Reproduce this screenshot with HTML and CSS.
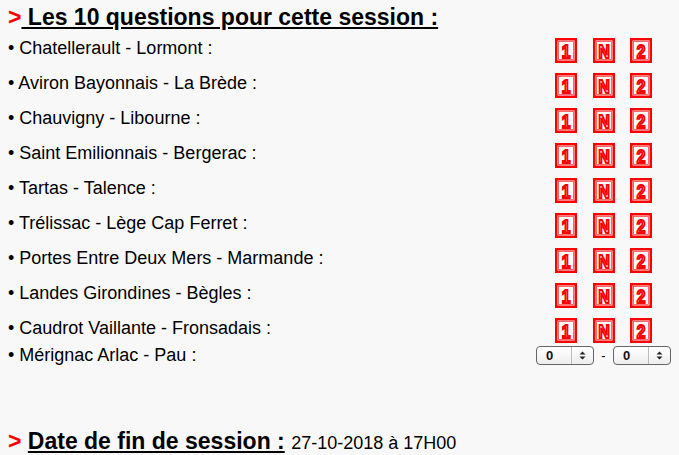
FILE: index.html
```html
<!DOCTYPE html>
<html lang="fr">
<head>
    <meta charset="UTF-8">
    <title>Questions de la session</title>
    <link rel="stylesheet" href="styles.css">
</head>
<body>
    <h2 class="title"><span class="arrow">&gt;</span><u> Les 10 questions pour cette session :</u></h2>

    <div class="questions" id="questions"></div>

    <div class="row last">
        <div class="label">&bull; Mérignac Arlac - Pau :</div>
        <div class="choices">
            <span class="select"><span class="val">0</span><span class="spin"><svg width="7" height="9" viewBox="0 0 7 9"><path d="M3.5 0.5 L6.5 3.5 L0.5 3.5 Z M3.5 8.5 L6.5 5.5 L0.5 5.5 Z" fill="#222"/></svg></span></span>
            <span class="dash">-</span>
            <span class="select"><span class="val">0</span><span class="spin"><svg width="7" height="9" viewBox="0 0 7 9"><path d="M3.5 0.5 L6.5 3.5 L0.5 3.5 Z M3.5 8.5 L6.5 5.5 L0.5 5.5 Z" fill="#222"/></svg></span></span>
        </div>
    </div>

    <h2 class="title end"><span class="arrow">&gt;</span> <u>Date de fin de session :</u> <span class="date">27-10-2018 à 17H00</span></h2>

    <script>
        // Matches of the session
        const matches = [
            'Chatellerault - Lormont',
            'Aviron Bayonnais - La Brède',
            'Chauvigny - Libourne',
            'Saint Emilionnais - Bergerac',
            'Tartas - Talence',
            'Trélissac - Lège Cap Ferret',
            'Portes Entre Deux Mers - Marmande',
            'Landes Girondines - Bègles',
            'Caudrot Vaillante - Fronsadais'
        ];

        function choiceBox(sign) {
            return `<svg class="pick" width="22" height="25" viewBox="0 0 22 25">
                <rect x="1.25" y="1.25" width="19.5" height="22.5" fill="#fff" stroke="#f00" stroke-width="2.5"/>
                <rect x="3.5" y="3.5" width="15" height="18" fill="none" stroke="#f44" stroke-width="0.8"/>
                <text x="0" y="19.8" transform="translate(11 0) scale(0.82 1)" text-anchor="middle" font-family="Liberation Sans, Arial, sans-serif" font-weight="bold" font-size="19" fill="#fcc" stroke="#f00" stroke-width="2">${sign}</text>
            </svg>`;
        }

        const list = document.getElementById('questions');
        list.innerHTML = matches.map(m => `
            <div class="row">
                <div class="label">&bull; ${m} :</div>
                <div class="choices">${choiceBox('1')}${choiceBox('N')}${choiceBox('2')}</div>
            </div>`).join('');
    </script>
</body>
</html>
```

FILE: styles.css
```css
body {
    font-family: "Liberation Sans", Arial, sans-serif;
    font-size: 18px;
    margin: 0 8px;
    background-color: #f8f8f8;
    color: #000;
}
.title {
    font-size: 23px;
    font-weight: bold;
    margin: 4px 0 0;
    line-height: normal;
}
.arrow {
    color: #f00;
}
.questions {
    margin-top: 7px;
    display: flex;
    flex-direction: column;
    gap: 10px;
}
.row {
    display: flex;
    align-items: flex-start;
    height: 25px;
}
.label {
    flex: 1;
    line-height: 21px;
}
.choices {
    width: 135px;
    display: flex;
    justify-content: center;
    gap: 16px;
}
.pick {
    display: block;
}
.pick + .pick + .pick {
    margin-left: -1px;
}
.row.last {
    margin-top: 2px;
    height: 21px;
    align-items: center;
}
.row.last .choices {
    gap: 0;
}
.select {
    width: 58px;
    height: 19px;
    box-sizing: border-box;
    border: 1px solid #666;
    border-radius: 4px;
    background: linear-gradient(#fff, #eee);
    display: flex;
    font-size: 13px;
    font-weight: bold;
    color: #111;
}
.val {
    width: 35px;
    padding-left: 9px;
    box-sizing: border-box;
    border-right: 1px solid #bbb;
    line-height: 17px;
}
.spin {
    flex: 1;
    display: flex;
    align-items: center;
    justify-content: center;
}
.spin svg {
    display: block;
}
.dash {
    width: 19px;
    text-align: center;
    font-size: 13px;
    line-height: 19px;
}
.title.end {
    margin-top: 62px;
}
.date {
    font-weight: normal;
    font-size: 18px;
}
```
